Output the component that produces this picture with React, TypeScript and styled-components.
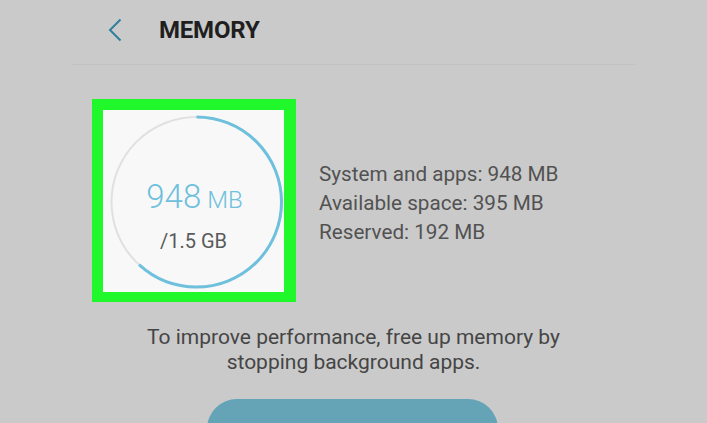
import styled, { createGlobalStyle } from "styled-components";

const GlobalStyle = createGlobalStyle`
  html, body {
    margin: 0;
    padding: 0;
    background: #cacaca;
  }
  body {
    font-family: Roboto, "Liberation Sans", sans-serif;
  }
`;

const USED = 948;
const TOTAL = 1536;

const Gauge: React.FC<{ used: number; total: number }> = ({ used, total }) => {
  const r = 85;
  const c = 2 * Math.PI * r;
  const part = (used / total) * c;
  return (
    <Ring width="181" height="182" viewBox="0 0 181 182">
      <circle cx="93.5" cy="92" r={r} fill="none" stroke="#e0e0e0" strokeWidth="2" />
      <circle
        cx="93.5"
        cy="92"
        r={r}
        fill="none"
        stroke="#6ec0dc"
        strokeWidth="3"
        strokeDasharray={`${part} ${c}`}
        transform="rotate(-90 93.5 92)"
      />
    </Ring>
  );
};

const App: React.FC = () => {
  return (
    <Page>
      <GlobalStyle />
      <Content>
        <Header>
          <BackIcon width="16" height="24" viewBox="0 0 16 24">
            <path d="M13.5 1.5 L3 12 L13.5 22.5" fill="none" stroke="#2f7f9c" strokeWidth="2" />
          </BackIcon>
          <Title>MEMORY</Title>
        </Header>

        <Summary>
          <GaugeFrame>
            <Gauge used={USED} total={TOTAL} />
            <Used>
              {USED}
              <Unit>MB</Unit>
            </Used>
            <Total>/1.5 GB</Total>
          </GaugeFrame>

          <Stats>
            <StatLine>System and apps: 948 MB</StatLine>
            <StatLine>Available space: 395 MB</StatLine>
            <StatLine>Reserved: 192 MB</StatLine>
          </Stats>
        </Summary>

        <Note>
          To improve performance, free up memory by
          <br />
          stopping background apps.
        </Note>

        <CleanButton />
      </Content>
    </Page>
  );
};

const Page = styled.div`
  width: 707px;
  height: 423px;
  overflow: hidden;
  background: #cacaca;
`;

const Content = styled.div`
  width: 563px;
  margin-left: 72px;
  display: flex;
  flex-direction: column;
`;

const Header = styled.div`
  height: 65px;
  border-bottom: 1px solid #c2c2c2;
  display: flex;
  align-items: center;
  padding-left: 35px;
  gap: 36px;
  box-sizing: border-box;
`;

const BackIcon = styled.svg`
  display: block;
  margin-top: -4px;
`;

const Title = styled.h1`
  margin: 0;
  margin-top: -4px;
  font-size: 24px;
  font-weight: 700;
  color: #1f1f1f;
  letter-spacing: -0.2px;
`;

const Summary = styled.div`
  display: flex;
  align-items: center;
  padding-top: 34px;
  padding-left: 20px;
  gap: 23px;
`;

const GaugeFrame = styled.div`
  position: relative;
  width: 181px;
  height: 182px;
  border: 11px solid #20f82c;
  border-right-width: 12px;
  border-bottom-width: 10px;
  background: #f8f8f8;
  display: flex;
  flex-direction: column;
  align-items: center;
  flex-shrink: 0;
`;

const Ring = styled.svg`
  position: absolute;
  left: 0;
  top: 0;
`;

const Used = styled.div`
  position: relative;
  margin-top: 69px;
  margin-left: 2px;
  color: #6ec0dc;
  font-size: 33px;
  font-weight: 300;
  line-height: 36px;
`;

const Unit = styled.span`
  font-size: 24px;
  margin-left: 6px;
`;

const Total = styled.div`
  position: relative;
  margin-top: 11px;
  color: #5a5a5a;
  font-size: 20px;
  line-height: 24px;
`;

const Stats = styled.div`
  display: flex;
  flex-direction: column;
  margin-top: 6px;
`;

const StatLine = styled.div`
  font-size: 20.7px;
  line-height: 29px;
  color: #525252;
`;

const Note = styled.p`
  margin: 23px 0 0;
  text-align: center;
  font-size: 21px;
  line-height: 25px;
  color: #454545;
`;

const CleanButton = styled.div`
  align-self: center;
  margin-top: 24px;
  margin-left: -2px;
  width: 291px;
  height: 60px;
  border-radius: 32px;
  background: #65a4b7;
`;

export default App;
